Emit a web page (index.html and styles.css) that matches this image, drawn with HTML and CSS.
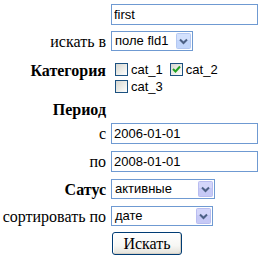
FILE: index.html
```html
<!DOCTYPE html>
<html lang="ru">
<head>
<meta charset="utf-8">
<title>Поиск</title>
<link rel="stylesheet" href="styles.css">
</head>
<body>
<form class="form">
  <div class="row r1">
    <span class="lbl"></span>
    <input class="txt" type="text" value="first">
  </div>
  <div class="row r2">
    <span class="lbl">искать в</span>
    <span class="sel w82"><span class="val">поле fld1</span><svg class="arr blue" width="15" height="16" viewBox="0 0 15 16"><rect x="0.5" y="0.5" width="14" height="15" rx="1" fill="#c3d6fb" stroke="#b4c8f2"/><rect x="1" y="1" width="13" height="6" fill="#d3e1fd"/><path d="M4 6.5 L7.5 10 L11 6.5" fill="none" stroke="#4d6185" stroke-width="2"/></svg></span>
  </div>
  <div class="row r3">
    <span class="lbl b">Категория</span>
    <div class="cats">
      <label class="cb"><span class="box"></span>cat_1</label>
      <label class="cb"><span class="box"><svg width="11" height="11" viewBox="0 0 11 11"><path d="M2 5 L4.5 7.5 L9 2.5" fill="none" stroke="#21a121" stroke-width="2"/></svg></span>cat_2</label>
      <label class="cb"><span class="box"></span>cat_3</label>
    </div>
  </div>
  <div class="row r4">
    <span class="lbl b">Период</span>
  </div>
  <div class="row r5">
    <span class="lbl">с</span>
    <input class="txt" type="text" value="2006-01-01">
  </div>
  <div class="row r6">
    <span class="lbl">по</span>
    <input class="txt" type="text" value="2008-01-01">
  </div>
  <div class="row r7">
    <span class="lbl b">Сатус</span>
    <span class="sel w104"><span class="val">активные</span><svg class="arr" width="15" height="16" viewBox="0 0 15 16"><rect x="0.5" y="0.5" width="14" height="15" rx="1" fill="#c6c9f6" stroke="#b9bdf0"/><rect x="1" y="1" width="13" height="6" fill="#d4d6fa"/><path d="M4 6.5 L7.5 10 L11 6.5" fill="none" stroke="#4d6185" stroke-width="2"/></svg></span>
  </div>
  <div class="row r8">
    <span class="lbl">сортировать по</span>
    <span class="sel w102"><span class="val">дате</span><svg class="arr" width="15" height="16" viewBox="0 0 15 16"><rect x="0.5" y="0.5" width="14" height="15" rx="1" fill="#c6c9f6" stroke="#b9bdf0"/><rect x="1" y="1" width="13" height="6" fill="#d4d6fa"/><path d="M4 6.5 L7.5 10 L11 6.5" fill="none" stroke="#4d6185" stroke-width="2"/></svg></span>
  </div>
  <div class="row r9">
    <span class="lbl"></span>
    <button class="btn" type="button">Искать</button>
  </div>
</form>
</body>
</html>
```

FILE: styles.css
```css
html, body {
  margin: 0;
  padding: 0;
  background: #ffffff;
}
body {
  padding-top: 4px;
  font-family: "Liberation Serif", "Times New Roman", serif;
  font-size: 16px;
  color: #000000;
}
.form {
  display: flex;
  flex-direction: column;
  margin: 0;
}
.row {
  display: flex;
  align-items: center;
  gap: 5px;
}
.lbl {
  width: 106px;
  flex: none;
  text-align: right;
  white-space: nowrap;
  line-height: 17px;
}
.b { font-weight: bold; }

.r1 { margin-bottom: 6px; }
.r2 { margin-bottom: 10px; }
.r3 { align-items: baseline; }
.r4 { margin-top: 6px; margin-bottom: 5px; }
.r5 { margin-bottom: 7px; }
.r6 { margin-bottom: 7px; }
.r7 { margin-bottom: 7px; }
.r8 { margin-bottom: 6px; }

.txt {
  box-sizing: border-box;
  width: 147px;
  height: 21px;
  margin: 0;
  padding: 0 2px;
  border: 1px solid #6f9ad2;
  font-family: "Liberation Sans", Arial, sans-serif;
  font-size: 13px;
  color: #000;
  background: #fff;
  outline: none;
}

.sel {
  box-sizing: border-box;
  display: inline-flex;
  align-items: center;
  height: 20px;
  padding: 1px;
  border: 1px solid #6f9ad2;
  background: #fff;
  font-family: "Liberation Sans", Arial, sans-serif;
  font-size: 13px;
}
.w82 { width: 82px; }
.w104 { width: 104px; }
.w102 { width: 102px; }
.val {
  flex: 1;
  padding-left: 2px;
  white-space: nowrap;
  line-height: 16px;
}
.arr {
  display: block;
  flex: none;
}

.cats {
  width: 147px;
  display: flex;
  flex-wrap: wrap;
  font-family: "Liberation Sans", Arial, sans-serif;
  font-size: 13px;
}
.cb {
  display: inline-flex;
  align-items: center;
  height: 17px;
  line-height: 17px;
  margin-right: 3px;
}
.box {
  box-sizing: border-box;
  width: 13px;
  height: 13px;
  margin: 0 3px 0 4px;
  border: 1px solid #1c5180;
  background: linear-gradient(135deg, #d6d6d0 0%, #ebebe6 50%, #ffffff 100%);
  display: inline-flex;
  align-items: center;
  justify-content: center;
}
.box svg { display: block; }

.btn {
  box-sizing: border-box;
  width: 70px;
  height: 23px;
  margin: 0 0 0 1px;
  padding: 0;
  border: 1px solid #003c74;
  border-radius: 3px;
  background: linear-gradient(#ffffff 0%, #f7f7f4 60%, #e3e2da 100%);
  box-shadow: inset -1px -1px 0 #d6d0c5, inset 1px 1px 0 #ffffff;
  font-family: "Liberation Serif", "Times New Roman", serif;
  font-size: 16px;
  color: #000;
  line-height: 20px;
}
```
